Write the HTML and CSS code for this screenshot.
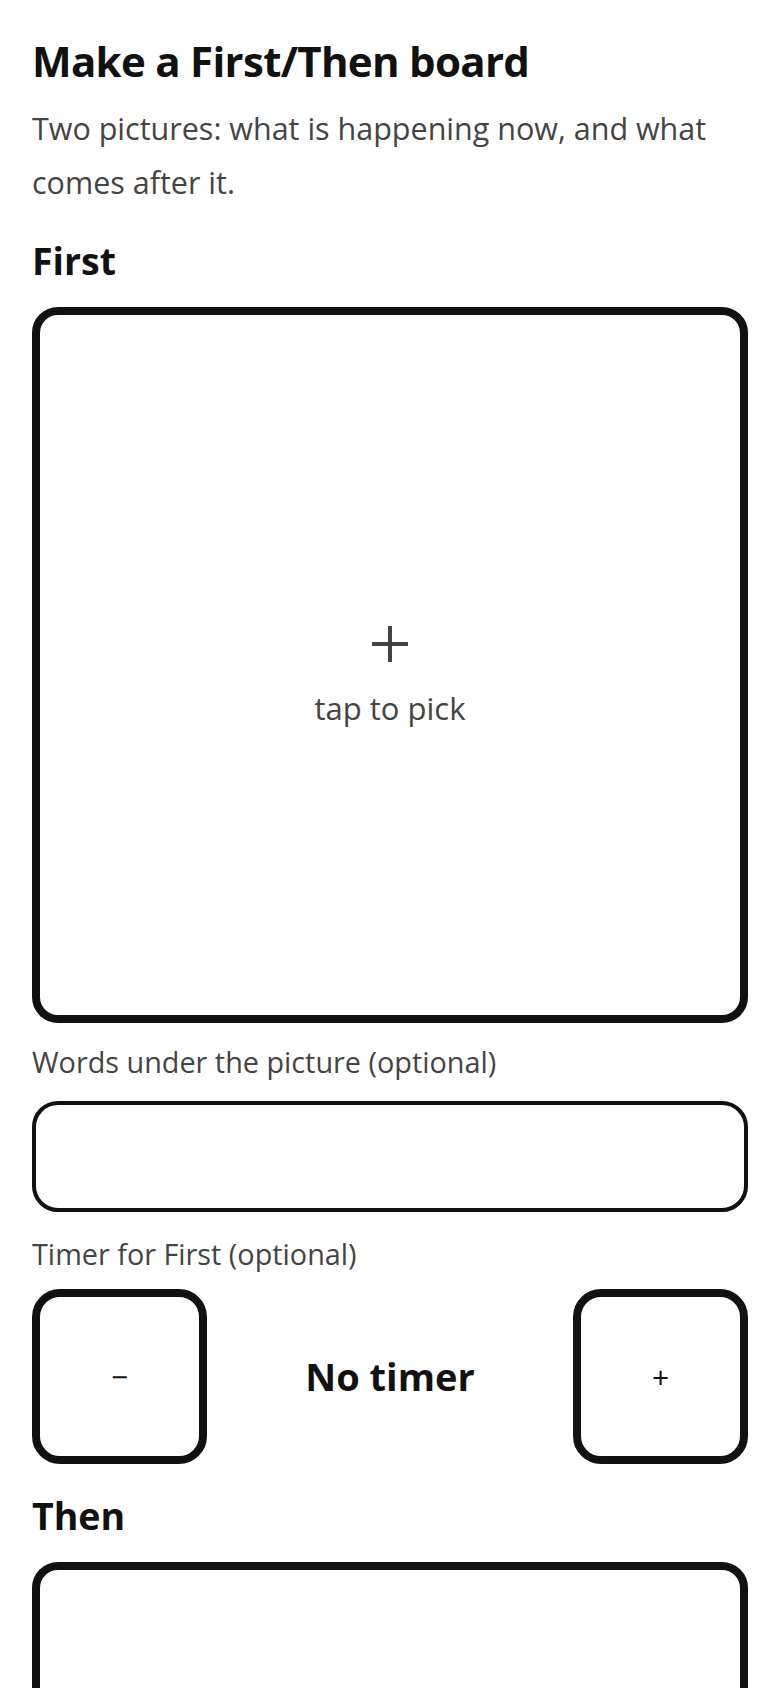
FILE: index.html
```html
<!DOCTYPE html>
<html lang="en">
<head>
<meta charset="utf-8">
<title>Make a First/Then board</title>
<link rel="stylesheet" href="styles.css">
</head>
<body>
<main class="page">
  <h1 class="title">Make a First/Then board</h1>
  <p class="intro">Two pictures: what is happening now, and what comes after it.</p>

  <section class="step">
    <h2 class="step-title">First</h2>
    <button class="picker" type="button">
      <svg class="picker-plus" width="38" height="38" viewBox="0 0 38 38" aria-hidden="true">
        <path d="M19 1V37M1 19H37" stroke="#444" stroke-width="4" fill="none"/>
      </svg>
      <span class="picker-text">tap to pick</span>
    </button>
    <label class="field-label field-label-words" for="first-words">Words under the picture (optional)</label>
    <input class="words-input" id="first-words" type="text">
    <div class="field-label field-label-timer">Timer for First (optional)</div>
    <div class="timer">
      <button class="timer-btn" type="button" aria-label="Less time">−</button>
      <div class="timer-value">No timer</div>
      <button class="timer-btn" type="button" aria-label="More time">+</button>
    </div>
  </section>

  <section class="step">
    <h2 class="step-title">Then</h2>
    <button class="picker" type="button">
      <svg class="picker-plus" width="38" height="38" viewBox="0 0 38 38" aria-hidden="true">
        <path d="M19 1V37M1 19H37" stroke="#444" stroke-width="4" fill="none"/>
      </svg>
      <span class="picker-text">tap to pick</span>
    </button>
  </section>
</main>
</body>
</html>
```
FILE: styles.css
```css
* {
  box-sizing: border-box;
}

html, body {
  margin: 0;
  padding: 0;
  background: #ffffff;
}

body {
  font-family: "Open Sans", "Noto Sans", "DejaVu Sans", sans-serif;
  color: #111111;
}

.page {
  padding: 37px 32px 40px;
}

.title {
  margin: 0;
  font-size: 42px;
  line-height: 48px;
  font-weight: 700;
  letter-spacing: -0.7px;
  color: #111111;
}

.intro {
  margin: 16px 0 0;
  font-size: 30.5px;
  line-height: 54px;
  color: #444444;
}

.step-title {
  margin: 30px 0 25px;
  font-size: 37.5px;
  line-height: 43px;
  font-weight: 700;
  color: #111111;
}

.picker {
  display: flex;
  flex-direction: column;
  align-items: center;
  justify-content: center;
  width: 100%;
  aspect-ratio: 1 / 1;
  padding: 24px 0 0;
  margin: 0;
  background: #ffffff;
  border: 8px solid #111111;
  border-radius: 26px;
  font-family: inherit;
  cursor: pointer;
}

.picker-plus {
  display: block;
}

.picker-text {
  display: block;
  margin-top: 24px;
  font-size: 31px;
  line-height: 42px;
  color: #444444;
}

.field-label {
  display: block;
  font-size: 28.8px;
  line-height: 40px;
  color: #444444;
}

.field-label-words {
  margin-top: 19px;
}

.field-label-timer {
  margin-top: 22px;
}

.words-input {
  display: block;
  width: 100%;
  height: 111px;
  margin: 19px 0 0;
  padding: 0 24px;
  border: 4px solid #111111;
  border-radius: 26px;
  background: #ffffff;
  font-family: inherit;
  font-size: 30px;
  color: #111111;
}

.timer {
  display: flex;
  align-items: center;
  justify-content: space-between;
  margin-top: 15px;
}

.timer-btn {
  width: 175px;
  height: 175px;
  margin: 0;
  padding: 0;
  background: #ffffff;
  border: 8px solid #111111;
  border-radius: 28px;
  font-family: inherit;
  font-size: 30px;
  line-height: 1;
  color: #111111;
  cursor: pointer;
}

.timer-value {
  font-size: 38px;
  line-height: 43px;
  font-weight: 700;
  color: #111111;
}
```
